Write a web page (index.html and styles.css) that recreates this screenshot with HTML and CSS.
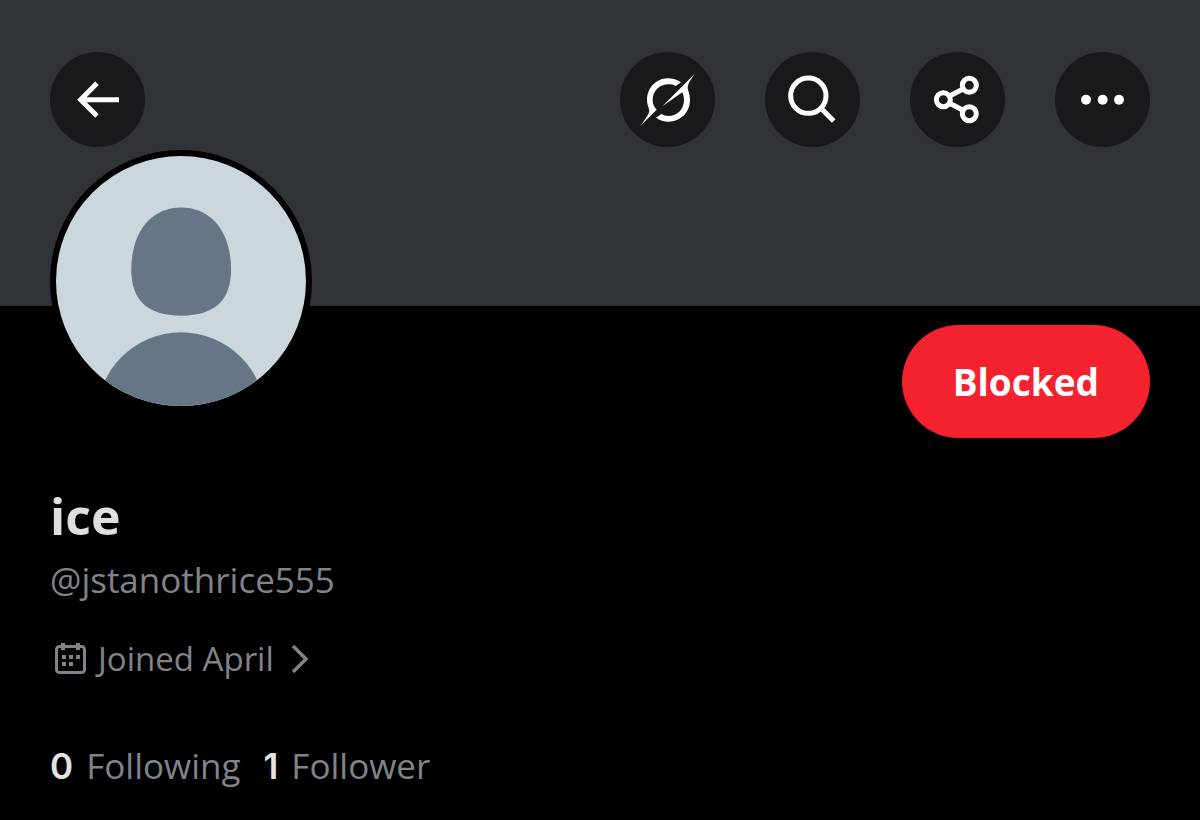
FILE: index.html
```
<!DOCTYPE html>
<html lang="en">
<head>
  <meta charset="UTF-8">
  <meta name="viewport" content="width=device-width, initial-scale=1">
  <title>ice (@jstanothrice555)</title>
  <link rel="stylesheet" href="styles.css">
</head>
<body>

  <header class="banner">
    <button class="round-btn" type="button" aria-label="Back">
      <svg viewBox="30 37 285 285"><path d="M237 180H122M171 131L122 180L171 229" fill="none" stroke="#fff" stroke-width="15"/></svg>
    </button>
    <div class="actions">
      <button class="round-btn" type="button" aria-label="Grok">
        <svg viewBox="30 37 285 285" fill="#fff">
          <path d="M213 128C199 118 185 116 173 116C137 117 111 146 111 181C111 193 115 201 117 208C120 218 114 228 90 260L140 210C132 202 128 193 128 181C128 154 149 134 175 134C183 134 190 135 197 139Z"/>
          <path d="M157 200L256 101C242 120 230 136 234 151C238 162 240 170 240 181C240 218 211 246 176 246C162 246 149 242 138 234L154 223C161 227 168 229 176 229C202 229 222 208 222 181C222 174 221 167 217 158Z"/>
        </svg>
      </button>
      <button class="round-btn" type="button" aria-label="Search">
        <svg viewBox="30 37 285 285" fill="none" stroke="#fff" stroke-width="15"><circle cx="160" cy="168" r="53"/><path d="M197 205L236 244"/></svg>
      </button>
      <button class="round-btn" type="button" aria-label="Share">
        <svg viewBox="30 37 285 285" fill="none" stroke="#fff" stroke-width="15"><circle cx="130" cy="180" r="21"/><circle cx="208" cy="137" r="21"/><circle cx="208" cy="222" r="21"/><path d="M149 169L189 148M149 191L189 212"/></svg>
      </button>
      <button class="round-btn" type="button" aria-label="More">
        <svg viewBox="30 37 285 285" fill="#fff"><circle cx="123" cy="180" r="15"/><circle cx="173" cy="180" r="15"/><circle cx="222" cy="180" r="15"/></svg>
      </button>
    </div>
  </header>

  <main class="profile">
    <div class="profile-top">
      <div class="avatar">
        <svg viewBox="50 50 747 747" role="img" aria-label="Profile picture">
          <path d="M424 204C514 204 573 276 573 390C573 480 526 527 424 527C322 527 275 480 275 390C275 276 334 204 424 204Z"/>
          <circle cx="424" cy="829" r="252"/>
        </svg>
      </div>
      <button class="blocked-btn" type="button">Blocked</button>
    </div>

    <h1 class="name">ice</h1>
    <p class="handle">@jstanothrice555</p>

    <a class="joined" href="#">
      <svg class="calendar" viewBox="0 0 32 32">
        <rect x="2.5" y="3.5" width="28" height="26" rx="3" fill="none" stroke="currentColor" stroke-width="3"/>
        <path d="M7 0h4v7h-4zM22 0h4v7h-4zM8 12h4v4h-4zM15 12h4v4h-4zM22 12h4v4h-4zM8 19h4v4h-4zM15 19h4v4h-4z" fill="currentColor"/>
      </svg>
      <span>Joined April</span>
      <svg class="chevron" viewBox="0 0 18 30"><path d="M2 2L15 15L2 28" fill="none" stroke="currentColor" stroke-width="3.500"/></svg>
    </a>

    <nav class="stats">
      <a href="#"><strong>0</strong> Following</a>
      <a href="#"><strong>1</strong> Follower</a>
    </nav>
  </main>

</body>
</html>
```
FILE: styles.css
```
* {
  box-sizing: border-box;
}

body {
  margin: 0;
  background: #000;
  color: #808389;
  font-family: "Open Sans", "Noto Sans", sans-serif;
}

button {
  border: none;
  padding: 0;
  font-family: inherit;
  cursor: pointer;
}

a {
  color: inherit;
  text-decoration: none;
}

svg {
  display: block;
}

.banner {
  display: flex;
  justify-content: space-between;
  align-items: flex-start;
  min-height: 306px;
  padding: 52px 50px;
  background: #2f3336;
}

.actions {
  display: flex;
  gap: 50px;
}

.round-btn {
  width: 95px;
  height: 95px;
  border-radius: 50%;
  background: #18191b;
}

.round-btn svg {
  width: 100%;
}

.profile {
  padding: 0 50px;
}

.profile-top {
  display: flex;
  justify-content: space-between;
  align-items: flex-start;
}

.avatar {
  width: 262px;
  height: 262px;
  margin-top: -156px;
  border: 6px solid #000;
  border-radius: 50%;
  background: #ccd6dd;
  overflow: hidden;
}

.avatar svg {
  fill: #657786;
}

.blocked-btn {
  margin-top: 19px;
  padding: 0 51px;
  border-radius: 57px;
  background: #f4212e;
  color: #fff;
  font-size: 37px;
  font-weight: bold;
  line-height: 113px;
}

.name {
  margin: 46px 0 0;
  color: #dfdfdf;
  font-size: 50px;
  line-height: 64px;
}

.handle {
  margin: 8px 0 0;
  font-size: 35px;
  line-height: 48px;
}

.joined {
  display: flex;
  align-items: center;
  margin-top: 33px;
  padding-left: 4px;
  font-size: 33px;
  line-height: 44px;
}

.calendar {
  width: 32px;
  margin-right: 12px;
}

.chevron {
  width: 18px;
  margin-left: 17px;
}

.stats {
  display: flex;
  gap: 23px;
  margin-top: 61px;
  font-size: 35px;
  line-height: 48px;
}

.stats strong {
  margin-right: 4px;
  color: #e4e4e4;
  font-family: Inter, sans-serif;
  font-weight: 600;
}
```
